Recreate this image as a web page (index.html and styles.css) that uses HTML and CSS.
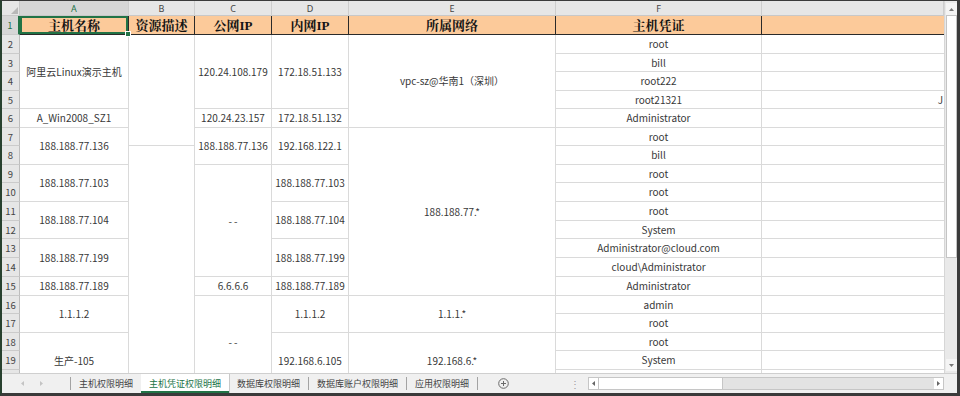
FILE: index.html
```html
<!DOCTYPE html>
<html lang="zh-CN">
<head>
<meta charset="utf-8">
<title>主机凭证权限明细</title>
<link rel="stylesheet" href="styles.css">
</head>
<body>
<div class="frame">
  <div class="sheet">
    <div class="grid">
      <!-- column letters -->
      <div class="corner"><svg class="corner-tri" width="7" height="7" viewBox="0 0 7 7"><polygon points="7,0 7,7 0,7" fill="#b8b8b8"/></svg></div>
      <div class="colhdr sel">A</div>
      <div class="colhdr">B</div>
      <div class="colhdr">C</div>
      <div class="colhdr">D</div>
      <div class="colhdr">E</div>
      <div class="colhdr">F</div>
      <div class="colhdr"></div>

      <!-- row 1 -->
      <div class="rh sel">1</div>
      <div class="hd ca active">主机名称</div>
      <div class="hd cb">资源描述</div>
      <div class="hd cc">公网IP</div>
      <div class="hd cd">内网IP</div>
      <div class="hd ce">所属网络</div>
      <div class="hd cf">主机凭证</div>
      <div class="hd cg last"></div>

      <!-- row 2 -->
      <div class="rh">2</div>
      <div class="c ca s4">阿里云Linux演示主机</div>
      <div class="c cb s6"></div>
      <div class="c cc s4">120.24.108.179</div>
      <div class="c cd s4">172.18.51.133</div>
      <div class="c ce s5">vpc-sz@华南1（深圳）</div>
      <div class="c cf">root</div>
      <div class="c cg"></div>

      <div class="rh">3</div>
      <div class="c cf">bill</div>
      <div class="c cg"></div>

      <div class="rh">4</div>
      <div class="c cf">root222</div>
      <div class="c cg"></div>

      <div class="rh">5</div>
      <div class="c cf">root21321</div>
      <div class="c cg clip">J</div>

      <div class="rh">6</div>
      <div class="c ca">A_Win2008_SZ1</div>
      <div class="c cc">120.24.23.157</div>
      <div class="c cd">172.18.51.132</div>
      <div class="c cf">Administrator</div>
      <div class="c cg"></div>

      <div class="rh">7</div>
      <div class="c ca s2">188.188.77.136</div>
      <div class="c cc s2">188.188.77.136</div>
      <div class="c cd s2">192.168.122.1</div>
      <div class="c ce s9">188.188.77.*</div>
      <div class="c cf">root</div>
      <div class="c cg"></div>

      <div class="rh">8</div>
      <div class="c cb s13"></div>
      <div class="c cf">bill</div>
      <div class="c cg"></div>

      <div class="rh">9</div>
      <div class="c ca s2">188.188.77.103</div>
      <div class="c cc s6">- -</div>
      <div class="c cd s2">188.188.77.103</div>
      <div class="c cf">root</div>
      <div class="c cg"></div>

      <div class="rh">10</div>
      <div class="c cf">root</div>
      <div class="c cg"></div>

      <div class="rh">11</div>
      <div class="c ca s2">188.188.77.104</div>
      <div class="c cd s2">188.188.77.104</div>
      <div class="c cf">root</div>
      <div class="c cg"></div>

      <div class="rh">12</div>
      <div class="c cf">System</div>
      <div class="c cg"></div>

      <div class="rh">13</div>
      <div class="c ca s2">188.188.77.199</div>
      <div class="c cd s2">188.188.77.199</div>
      <div class="c cf">Administrator@cloud.com</div>
      <div class="c cg"></div>

      <div class="rh">14</div>
      <div class="c cf">cloud\Administrator</div>
      <div class="c cg"></div>

      <div class="rh">15</div>
      <div class="c ca">188.188.77.189</div>
      <div class="c cc">6.6.6.6</div>
      <div class="c cd">188.188.77.189</div>
      <div class="c cf">Administrator</div>
      <div class="c cg"></div>

      <div class="rh">16</div>
      <div class="c ca s2">1.1.1.2</div>
      <div class="c cc s5">- -</div>
      <div class="c cd s2">1.1.1.2</div>
      <div class="c ce s2">1.1.1.*</div>
      <div class="c cf">admin</div>
      <div class="c cg"></div>

      <div class="rh">17</div>
      <div class="c cf">root</div>
      <div class="c cg"></div>

      <div class="rh">18</div>
      <div class="c ca s3">生产-105</div>
      <div class="c cd s3">192.168.6.105</div>
      <div class="c ce s3">192.168.6.*</div>
      <div class="c cf">root</div>
      <div class="c cg"></div>

      <div class="rh">19</div>
      <div class="c cf">System</div>
      <div class="c cg"></div>

      <div class="rh"></div>
      <div class="c cf"></div>
      <div class="c cg"></div>
    </div>
    <div class="vscroll">
      <div class="vbtn"><svg width="5" height="3" viewBox="0 0 5 3"><polygon points="0,3 5,3 2.5,0" fill="#777"/></svg></div>
      <div class="vthumb"></div>
      <div class="vtrack"></div>
      <div class="vbtn down"><svg width="5" height="3" viewBox="0 0 5 3"><polygon points="0,0 5,0 2.5,3" fill="#777"/></svg></div>
    </div>
  </div>
  <div class="tabbar">
    <div class="nav">
      <svg width="3" height="5" viewBox="0 0 3 5"><polygon points="3,0 3,5 0,2.5" fill="#c4c4c4"/></svg>
      <svg width="3" height="5" viewBox="0 0 3 5"><polygon points="0,0 0,5 3,2.5" fill="#c4c4c4"/></svg>
    </div>
    <span class="sep"></span>
    <div class="tab">主机权限明细</div>
    <div class="tab active">主机凭证权限明细</div>
    <div class="tab">数据库权限明细</div>
    <span class="sep"></span>
    <div class="tab">数据库账户权限明细</div>
    <span class="sep"></span>
    <div class="tab">应用权限明细</div>
    <span class="sep"></span>
    <div class="add"><svg width="11" height="11" viewBox="0 0 11 11"><circle cx="5.5" cy="5.5" r="4.8" fill="none" stroke="#6a6a6a" stroke-width="1"/><path d="M5.5 3v5M3 5.5h5" stroke="#6a6a6a" stroke-width="1"/></svg></div>
    <div class="dots">⋮</div>
    <div class="hscroll">
      <div class="hbtn"><svg width="3" height="5" viewBox="0 0 3 5"><polygon points="3,0 3,5 0,2.5" fill="#666"/></svg></div>
      <div class="hthumb"></div>
      <div class="htrack"></div>
      <div class="hbtn"><svg width="3" height="5" viewBox="0 0 3 5"><polygon points="0,0 0,5 3,2.5" fill="#666"/></svg></div>
    </div>
  </div>
</div>
</body>
</html>
```

FILE: styles.css
```css
html, body {
  margin: 0;
  padding: 0;
  background: #ffffff;
}

.frame {
  width: 960px;
  height: 396px;
  box-sizing: border-box;
  border-style: solid;
  border-width: 1px 3px 3px 2px;
  border-color: #3a3a3a;
  border-left-color: #28412f;
  display: flex;
  flex-direction: column;
  overflow: hidden;
  background: #ffffff;
  font-family: "Noto Sans CJK SC", sans-serif;
}

.sheet {
  flex: none;
  height: 372px;
  display: flex;
  overflow: hidden;
}

.grid {
  flex: none;
  width: 942px;
  height: 372px;
  overflow: hidden;
  display: grid;
  grid-template-columns: 18px 109px 66px 77px 77px 207px 206px 182px;
  grid-template-rows: 15px 19px 19px 18px 19px 18px 19px 18px 19px 18px 19px 19px 18px 19px 19px 19px 18px 19px 18px 19px 19px;
  align-content: start;
}

.corner {
  background: #e6e6e6;
  border-right: 1px solid #c8c8c8;
  border-bottom: 1px solid #c8c8c8;
  box-sizing: border-box;
  display: flex;
  align-items: flex-end;
  justify-content: flex-end;
  padding: 0 1px 1px 0;
}

.colhdr {
  background: #e6e6e6;
  border-right: 1px solid #cdcdcd;
  border-bottom: 1px solid #c8c8c8;
  box-sizing: border-box;
  display: flex;
  align-items: center;
  justify-content: center;
  font-family: "Noto Sans", "Liberation Sans", sans-serif;
  font-size: 9px;
  color: #444444;
  line-height: 1;
}

.colhdr.sel {
  background: #d6d6d6;
  color: #217346;
}

.rh {
  grid-column: 1;
  background: #e6e6e6;
  border-right: 1px solid #bdbdbd;
  border-bottom: 1px solid #cbcbcb;
  box-sizing: border-box;
  display: flex;
  align-items: center;
  justify-content: center;
  font-size: 9.5px;
  color: #444444;
  line-height: 1;
  padding-top: 2px;
}

.rh.sel {
  background: #d6d6d6;
  color: #217346;
  border-right: 2px solid #217346;
}

.hd {
  background: #fcca9a;
  border-right: 1px solid #2a2a2a;
  border-bottom: 1px solid #2a2a2a;
  box-sizing: border-box;
  display: flex;
  align-items: center;
  justify-content: center;
  font-family: "Liberation Serif", "Noto Serif CJK SC", "Noto Sans CJK SC", serif;
  font-weight: 700;
  font-size: 13px;
  color: #141414;
  line-height: 1;
}

.hd.last {
  border-right: none;
}

.hd.active {
  position: relative;
  box-shadow: inset 0 0 0 2px #217346;
}

.hd.active::after {
  content: "";
  position: absolute;
  right: -3px;
  bottom: -3px;
  width: 4px;
  height: 4px;
  background: #217346;
  border: 1px solid #ffffff;
  z-index: 2;
}

.c {
  background: #ffffff;
  border-right: 1px solid #dadada;
  border-bottom: 1px solid #dadada;
  box-sizing: border-box;
  display: flex;
  align-items: center;
  justify-content: center;
  font-size: 10px;
  color: #383838;
  line-height: 1;
  white-space: nowrap;
  overflow: hidden;
}

.c.clip {
  justify-content: flex-end;
  padding-right: 1px;
  overflow: visible;
}

.ca { grid-column: 2; }
.cb { grid-column: 3; }
.cc { grid-column: 4; }
.cd { grid-column: 5; }
.ce { grid-column: 6; }
.cf { grid-column: 7; }
.cg { grid-column: 8; border-right: none; }

.s2 { grid-row-end: span 2; }
.s3 { grid-row-end: span 3; }
.s4 { grid-row-end: span 4; }
.s5 { grid-row-end: span 5; }
.s6 { grid-row-end: span 6; }
.s9 { grid-row-end: span 9; }
.s13 { grid-row-end: span 13; }

/* vertical scrollbar */
.vscroll {
  flex: none;
  width: 13px;
  height: 372px;
  box-sizing: border-box;
  background: #e9e9e9;
  border-left: 1px solid #d6d6d6;
  display: flex;
  flex-direction: column;
  align-items: center;
  padding: 2px 0 2px 0;
}

.vbtn {
  width: 11px;
  height: 12px;
  flex: none;
  display: flex;
  align-items: center;
  justify-content: center;
  background: #f4f4f4;
}

.vthumb {
  flex: none;
  width: 11px;
  height: 243px;
  box-sizing: border-box;
  background: #ffffff;
  border: 1px solid #c4c4c4;
}

.vtrack {
  flex: 1;
}

/* tab bar */
.tabbar {
  flex: none;
  height: 20px;
  display: flex;
  align-items: center;
  background: #f0f0f0;
  border-top: 1px solid #cfcfcf;
  box-sizing: border-box;
}

.nav {
  flex: none;
  width: 68px;
  height: 100%;
  display: flex;
  align-items: center;
  gap: 16px;
  padding-left: 19px;
  box-sizing: border-box;
}

.sep {
  flex: none;
  width: 1px;
  height: 13px;
  background: #a3a3a3;
}

.tab {
  flex: none;
  height: 100%;
  box-sizing: border-box;
  padding: 0 8px;
  display: flex;
  align-items: center;
  font-size: 9px;
  line-height: 1;
  color: #444444;
}

.tab.active {
  background: #ffffff;
  color: #217346;
  border-bottom: 2px solid #217346;
  padding-top: 2px;
  box-shadow: 1px 0 0 #c9c9c9;
}

.add {
  flex: none;
  margin-left: 20px;
  display: flex;
  align-items: center;
}

.dots {
  flex: none;
  margin-left: auto;
  margin-right: 8px;
  font-size: 10px;
  color: #9a9a9a;
  line-height: 1;
}

.hscroll {
  flex: none;
  width: 356px;
  height: 13px;
  margin-right: 13px;
  box-sizing: border-box;
  border: 1px solid #c6c6c6;
  background: #e3e3e3;
  display: flex;
}

.hbtn {
  flex: none;
  width: 9px;
  height: 100%;
  background: #ffffff;
  display: flex;
  align-items: center;
  justify-content: center;
}

.hthumb {
  flex: none;
  width: 125px;
  height: 100%;
  box-sizing: border-box;
  background: #ffffff;
  border-left: 1px solid #c6c6c6;
  border-right: 1px solid #c6c6c6;
}

.htrack {
  flex: 1;
}
```
